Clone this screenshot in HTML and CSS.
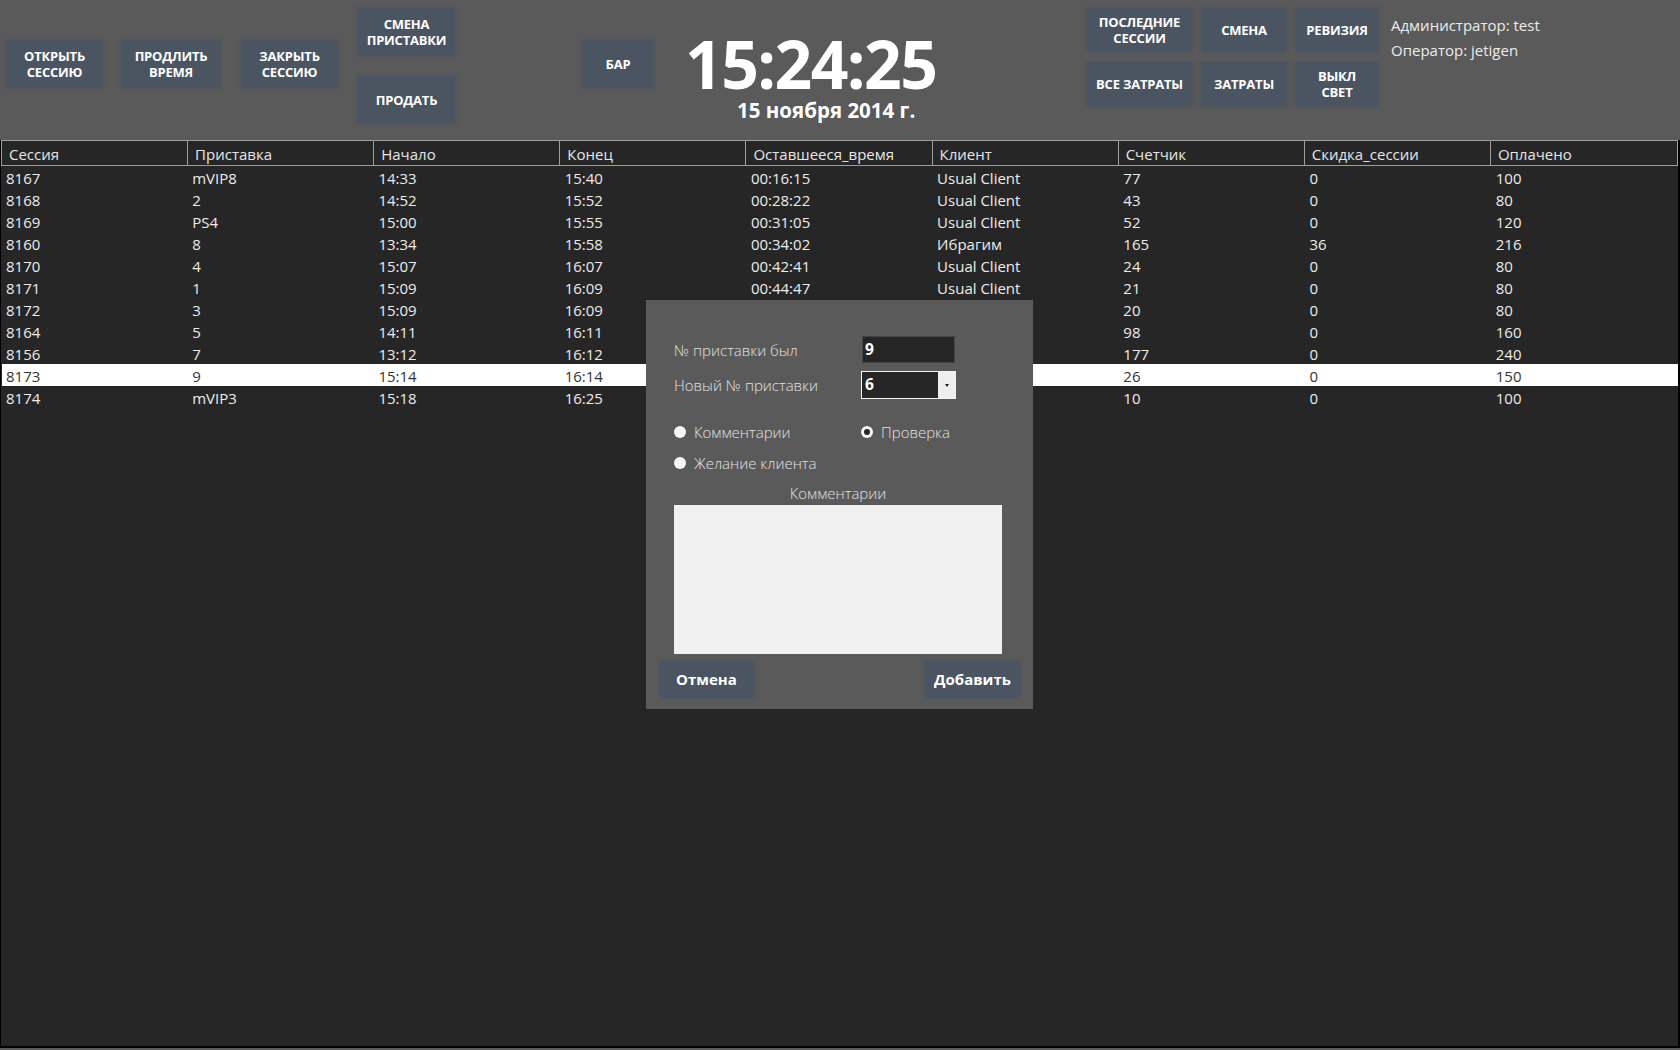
FILE: index.html
```html
<!DOCTYPE html>
<html lang="ru">
<head>
<meta charset="utf-8">
<title>Сессии</title>
<link rel="stylesheet" href="styles.css">
</head>
<body>
<div class="app">
  <header class="toolbar">
    <div class="btn w95 top40">ОТКРЫТЬ<br>СЕССИЮ</div>
    <div class="btn w98 top40 ml20">ПРОДЛИТЬ<br>ВРЕМЯ</div>
    <div class="btn w95 top40 ml22">ЗАКРЫТЬ<br>СЕССИЮ</div>
    <div class="stack ml21">
      <div class="btn w97">СМЕНА<br>ПРИСТАВКИ</div>
      <div class="btn w97">ПРОДАТЬ</div>
    </div>
    <div class="btn bar">БАР</div>
    <div class="clock">
      <div class="time">15:24:25</div>
      <div class="date">15 ноября 2014 г.</div>
    </div>
    <div class="rgrid">
      <div class="btn">ПОСЛЕДНИЕ<br>СЕССИИ</div>
      <div class="btn">СМЕНА</div>
      <div class="btn">РЕВИЗИЯ</div>
      <div class="btn">ВСЕ ЗАТРАТЫ</div>
      <div class="btn">ЗАТРАТЫ</div>
      <div class="btn">ВЫКЛ<br>СВЕТ</div>
    </div>
    <div class="user">
      <div>Администратор: test</div>
      <div>Оператор: jetigen</div>
    </div>
  </header>

  <main class="gridwrap">
    <div class="thead">
      <div class="th">Сессия</div>
      <div class="th">Приставка</div>
      <div class="th">Начало</div>
      <div class="th">Конец</div>
      <div class="th">Оставшееся_время</div>
      <div class="th">Клиент</div>
      <div class="th">Счетчик</div>
      <div class="th">Скидка_сессии</div>
      <div class="th last">Оплачено</div>
    </div>
    <div class="tbody">
      <div class="tr"><div>8167</div><div>mVIP8</div><div>14:33</div><div>15:40</div><div>00:16:15</div><div>Usual Client</div><div>77</div><div>0</div><div>100</div></div>
      <div class="tr"><div>8168</div><div>2</div><div>14:52</div><div>15:52</div><div>00:28:22</div><div>Usual Client</div><div>43</div><div>0</div><div>80</div></div>
      <div class="tr"><div>8169</div><div>PS4</div><div>15:00</div><div>15:55</div><div>00:31:05</div><div>Usual Client</div><div>52</div><div>0</div><div>120</div></div>
      <div class="tr"><div>8160</div><div>8</div><div>13:34</div><div>15:58</div><div>00:34:02</div><div>Ибрагим</div><div>165</div><div>36</div><div>216</div></div>
      <div class="tr"><div>8170</div><div>4</div><div>15:07</div><div>16:07</div><div>00:42:41</div><div>Usual Client</div><div>24</div><div>0</div><div>80</div></div>
      <div class="tr"><div>8171</div><div>1</div><div>15:09</div><div>16:09</div><div>00:44:47</div><div>Usual Client</div><div>21</div><div>0</div><div>80</div></div>
      <div class="tr"><div>8172</div><div>3</div><div>15:09</div><div>16:09</div><div></div><div></div><div>20</div><div>0</div><div>80</div></div>
      <div class="tr"><div>8164</div><div>5</div><div>14:11</div><div>16:11</div><div></div><div></div><div>98</div><div>0</div><div>160</div></div>
      <div class="tr"><div>8156</div><div>7</div><div>13:12</div><div>16:12</div><div></div><div></div><div>177</div><div>0</div><div>240</div></div>
      <div class="tr sel"><div>8173</div><div>9</div><div>15:14</div><div>16:14</div><div></div><div></div><div>26</div><div>0</div><div>150</div></div>
      <div class="tr"><div>8174</div><div>mVIP3</div><div>15:18</div><div>16:25</div><div></div><div></div><div>10</div><div>0</div><div>100</div></div>
    </div>
  </main>

  <div class="dialog">
    <div class="frow">
      <div class="flabel">№ приставки был</div>
      <div class="input">9</div>
    </div>
    <div class="frow r2">
      <div class="flabel">Новый № приставки</div>
      <div class="combo">
        <div class="cval">6</div>
        <div class="carrow"><span class="tri"></span></div>
      </div>
    </div>
    <div class="radios">
      <div class="radio"><span class="dot"></span><span>Комментарии</span></div>
      <div class="radio"><span class="dot on"></span><span>Проверка</span></div>
      <div class="radio"><span class="dot"></span><span>Желание клиента</span></div>
    </div>
    <div class="clabel">Комментарии</div>
    <div class="textarea"></div>
    <div class="dbtns">
      <div class="dbtn cancel">Отмена</div>
      <div class="dbtn add">Добавить</div>
    </div>
  </div>
</div>
</body>
</html>
```

FILE: styles.css
```css
* { box-sizing: border-box; }
html, body { margin: 0; padding: 0; }
body {
  width: 1680px;
  height: 1050px;
  overflow: hidden;
  background: #5a5a5a;
  font-family: "Open Sans", "Noto Sans", sans-serif;
  color: #ececec;
}
.app { position: relative; width: 1680px; height: 1050px; }

.toolbar {
  height: 140px;
  background: #5a5a5a;
  display: flex;
  align-items: flex-start;
  padding-left: 7px;
}
.btn {
  background: #4b5461;
  box-shadow: 0 0 3px 1px rgba(75, 84, 97, 0.8);
  color: #ffffff;
  font-weight: 700;
  font-size: 13px;
  line-height: 16px;
  text-align: center;
  display: flex;
  align-items: center;
  justify-content: center;
  height: 47px;
  letter-spacing: -0.2px;
}
.w95 { width: 95px; }
.w97 { width: 97px; }
.w98 { width: 98px; }
.top40 { margin-top: 40px; }
.ml20 { margin-left: 20px; }
.ml22 { margin-left: 22px; }
.ml21 { margin-left: 21px; }
.stack {
  display: flex;
  flex-direction: column;
  gap: 21px;
  margin-top: 8px;
}
.bar { width: 70px; height: 48px; margin-top: 40px; margin-left: 128px; }

.clock {
  width: 402px;
  margin-left: 32px;
  margin-top: 34px;
  color: #ffffff;
  font-weight: 700;
}
.time {
  font-size: 66px;
  line-height: 58px;
  letter-spacing: -1.6px;
}
.date {
  font-size: 20.5px;
  line-height: 22px;
  margin-top: 7px;
  margin-left: 52px;
}

.rgrid {
  display: grid;
  grid-template-columns: 105px 84px 82px;
  grid-auto-rows: 44px;
  column-gap: 10px;
  row-gap: 10px;
  margin-top: 8px;
}
.rgrid .btn { height: 44px; }

.user {
  margin-left: 13px;
  margin-top: 13px;
  font-size: 15px;
  line-height: 25px;
  color: #ececec;
}

.gridwrap {
  height: 908px;
  background: #262626;
  border-left: 1px solid #000;
  border-right: 2px solid #000;
  border-bottom: 2px solid #000;
}
.thead {
  display: grid;
  grid-template-columns: repeat(9, 1fr);
  border: 1px solid #9e9e9e;
  height: 26px;
}
.th {
  border-right: 1px solid #9e9e9e;
  font-size: 15px;
  line-height: 24px;
  padding-top: 1px;
  padding-left: 7px;
  color: #e6e6e6;
}
.th.last { border-right: none; }
.tbody { padding-left: 1px; }
.tr {
  display: grid;
  grid-template-columns: repeat(9, 1fr);
  height: 22px;
  font-size: 15px;
  line-height: 22px;
  color: #ececec;
}
.tr > div { padding-left: 4px; padding-top: 1px; white-space: nowrap; }
.tr.sel { background: #ffffff; color: #333333; }

.dialog {
  position: absolute;
  left: 646px;
  top: 300px;
  width: 387px;
  height: 409px;
  background: #5a5a5a;
  padding: 36px 31px 0 28px;
}
.frow { display: flex; align-items: center; height: 27px; }
.frow.r2 { margin-top: 8px; height: 28px; }
.flabel {
  width: 188px;
  font-size: 15px;
  font-weight: 300;
  color: #e2e2e2;
}
.input {
  width: 93px;
  height: 27px;
  background: #262626;
  border: 1px solid #444;
  color: #fff;
  font-weight: 700;
  font-size: 15.5px;
  line-height: 24px;
  padding-left: 2px;
}
.combo {
  margin-left: -1px;
  width: 95px;
  height: 28px;
  border: 1px solid #f4f4f4;
  display: flex;
  background: #262626;
}
.cval {
  flex: 1;
  color: #fff;
  font-weight: 700;
  font-size: 15.5px;
  line-height: 25px;
  padding-left: 3px;
}
.carrow {
  width: 17px;
  background: #efefef;
  display: flex;
  align-items: center;
  justify-content: center;
}
.tri {
  width: 0; height: 0;
  border-left: 2.5px solid transparent;
  border-right: 2.5px solid transparent;
  border-top: 3px solid #222;
}
.radios {
  margin-top: 23px;
  display: grid;
  grid-template-columns: 187px 1fr;
  grid-auto-rows: 20px;
  row-gap: 11px;
}
.radio {
  display: flex;
  align-items: center;
  gap: 8px;
  font-size: 15px;
  font-weight: 300;
  color: #e2e2e2;
}
.dot {
  width: 12px;
  height: 12px;
  border-radius: 50%;
  background: #f6f6f6;
  display: flex;
  align-items: center;
  justify-content: center;
}
.dot.on::after {
  content: "";
  width: 6px;
  height: 6px;
  border-radius: 50%;
  background: #262626;
}
.clabel {
  margin-top: 10px;
  width: 328px;
  text-align: center;
  font-size: 15px;
  font-weight: 300;
  line-height: 20px;
  color: #e2e2e2;
}
.textarea {
  margin-top: 2px;
  width: 328px;
  height: 149px;
  background: #f0f0f0;
}
.dbtns {
  display: flex;
  justify-content: space-between;
  margin: 8px -18px 0 -14px;
}
.dbtn {
  height: 35px;
  background: #4b5461;
  box-shadow: 0 0 3px 1px rgba(75, 84, 97, 0.8);
  color: #fff;
  font-weight: 700;
  font-size: 15px;
  line-height: 35px;
  text-align: center;
}
.cancel { width: 93px; }
.add { width: 95px; }
```
